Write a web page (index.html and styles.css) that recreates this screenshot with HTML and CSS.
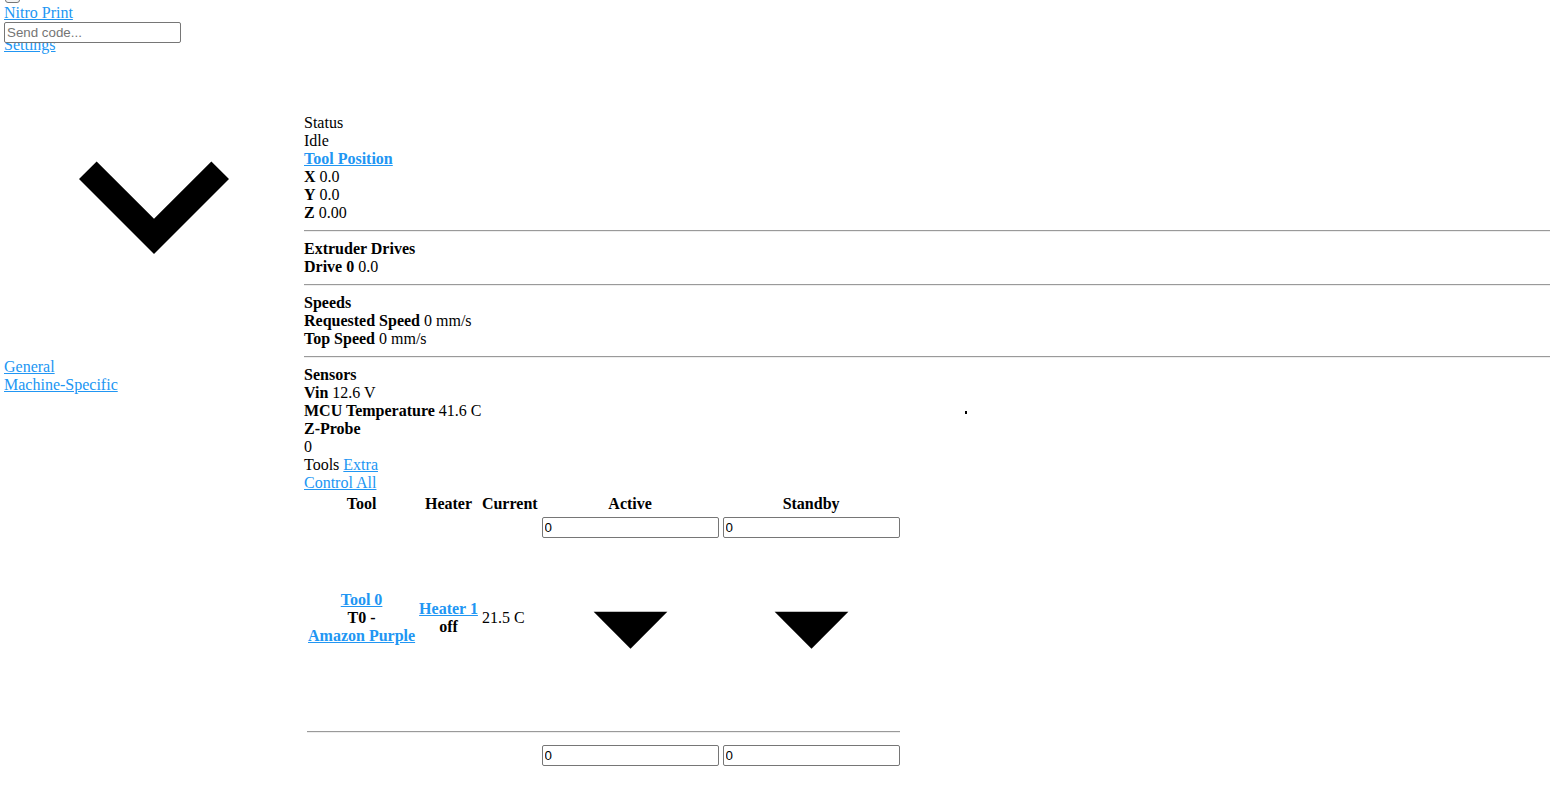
FILE: index.html
```html
<!DOCTYPE html>
<html lang="en">
<head>
<meta charset="utf-8">
<title>Nitro Print</title>
<link rel="stylesheet" href="styles.css">
</head>
<body>
<div class="app">
  <button class="nav-toggle" type="button" aria-label="Menu"></button>
  <a class="brand" href="#">Nitro Print</a>
  <div class="code-wrap"><input class="field" type="text" placeholder="Send code..."></div>
  <a class="block-link" href="#">Settings</a>
  <div class="layout">
    <aside class="sidebar">
      <svg class="chevron" viewBox="0 0 24 24" width="300" height="300"><path d="M7.41 8.59L12 13.17l4.59-4.58L18 10l-6 6-6-6 1.41-1.41z"/></svg>
      <a class="block-link" href="#">General</a>
      <a class="block-link" href="#">Machine-Specific</a>
    </aside>
    <main class="main">
      <span class="dot"></span>
      <div>Status</div>
      <div>Idle</div>
      <div><a href="#"><b>Tool Position</b></a></div>
      <div><b>X</b> 0.0</div>
      <div><b>Y</b> 0.0</div>
      <div><b>Z</b> 0.00</div>
      <hr>
      <div><b>Extruder Drives</b></div>
      <div><b>Drive 0</b> 0.0</div>
      <hr>
      <div><b>Speeds</b></div>
      <div><b>Requested Speed</b> 0 mm/s</div>
      <div><b>Top Speed</b> 0 mm/s</div>
      <hr>
      <div><b>Sensors</b></div>
      <div><b>Vin</b> 12.6 V</div>
      <div><b>MCU Temperature</b> 41.6 C</div>
      <div><b>Z-Probe</b></div>
      <div>0</div>
      <div>Tools <a href="#">Extra</a></div>
      <div><a href="#">Control All</a></div>
      <table class="tools">
        <thead>
          <tr><th class="tool-col">Tool</th><th>Heater</th><th>Current</th><th>Active</th><th>Standby</th></tr>
        </thead>
        <tbody>
          <tr>
            <th class="tool-col"><a href="#">Tool 0</a><br>T0 -<br><a href="#">Amazon Purple</a></th>
            <th><a href="#">Heater 1</a><br>off</th>
            <td>21.5 C</td>
            <td class="temp"><input class="field" type="text" value="0"><svg class="drop" viewBox="0 0 24 24" width="177" height="177"><path d="M7 10l5 5 5-5z"/></svg></td>
            <td class="temp"><input class="field" type="text" value="0"><svg class="drop" viewBox="0 0 24 24" width="177" height="177"><path d="M7 10l5 5 5-5z"/></svg></td>
          </tr>
          <tr><td colspan="5" class="sep"><hr></td></tr>
          <tr>
            <th class="tool-col"></th>
            <th></th>
            <td></td>
            <td class="temp"><input class="field" type="text" value="0"><svg class="drop" viewBox="0 0 24 24" width="177" height="177"><path d="M7 10l5 5 5-5z"/></svg></td>
            <td class="temp"><input class="field" type="text" value="0"><svg class="drop" viewBox="0 0 24 24" width="177" height="177"><path d="M7 10l5 5 5-5z"/></svg></td>
          </tr>
        </tbody>
      </table>
    </main>
  </div>
</div>
</body>
</html>
```
FILE: styles.css
```css
html, body {
  margin: 0;
  padding: 0;
  background: #fff;
}
body {
  font-family: "Liberation Serif", "Times New Roman", serif;
  font-size: 16px;
  color: #000;
}
a {
  color: #2196f3;
  text-decoration: underline;
}
.app {
  padding-left: 4px;
}
.nav-toggle {
  display: block;
  width: 15px;
  height: 16px;
  margin: -13px 0 1px 1px;
  padding: 0;
  border: 1px solid #767676;
  border-radius: 3px;
  background: #f4f4f4;
}
.brand,
.block-link {
  display: block;
  width: max-content;
}
.code-wrap {
  height: 14px;
  position: relative;
  z-index: 1;
}
.field {
  display: block;
  box-sizing: border-box;
  width: 177px;
  height: 21px;
  margin: 0;
  padding: 1px 2px;
  border: 1px solid #767676;
  border-radius: 2px;
  background: #fff;
  font-family: "Liberation Sans", Arial, sans-serif;
  font-size: 13.333px;
  color: #000;
}
.field::placeholder {
  color: #757575;
}
.layout {
  display: flex;
  align-items: flex-start;
}
.sidebar {
  width: 300px;
  flex: none;
}
.chevron {
  display: inline;
  vertical-align: baseline;
}
.main {
  flex: 1;
  min-width: 0;
  padding-top: 60px;
  position: relative;
}
.dot {
  position: absolute;
  left: 661px;
  top: 357px;
  width: 2px;
  height: 3px;
  background: #000;
}
hr {
  margin: 8px 0;
  height: 0;
  border: 0;
  border-top: 1px solid #9a9a9a;
  border-bottom: 1px solid #eeeeee;
}
.tools {
  border-collapse: separate;
  border-spacing: 2px;
}
.tools th,
.tools td {
  padding: 1px;
  vertical-align: middle;
}
.tools th {
  font-weight: bold;
  text-align: center;
}
.tools .tool-col {
  padding-left: 2px;
}
.tools td {
  text-align: left;
}
.tools td.sep {
  padding-left: 1px;
}
.drop {
  display: inline;
  vertical-align: baseline;
}
```
